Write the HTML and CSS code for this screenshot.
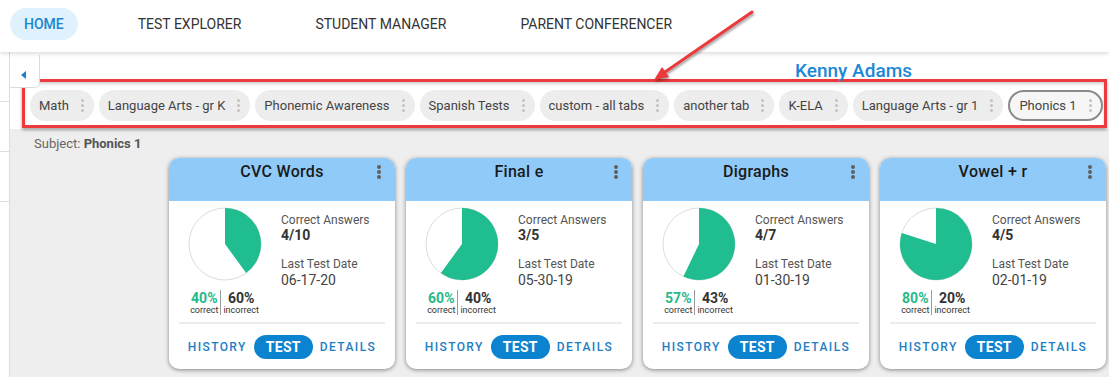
FILE: index.html
```html
<!DOCTYPE html>
<html lang="en">
<head>
  <meta charset="UTF-8">
  <meta name="viewport" content="width=device-width, initial-scale=1.0">
  <title>Home - Kenny Adams</title>
  <link rel="stylesheet" href="styles.css">
</head>
<body>
  <nav class="topnav">
    <a class="nav-item active">HOME</a>
    <a class="nav-item">TEST EXPLORER</a>
    <a class="nav-item">STUDENT MANAGER</a>
    <a class="nav-item">PARENT CONFERENCER</a>
  </nav>

  <div class="layout">
    <aside class="side">
      <div class="side-row first"></div>
      <div class="side-row"></div>
      <div class="side-row"></div>
    </aside>

    <main class="main">
      <button class="collapse" title="Collapse"><span class="tri-left"></span></button>

      <div class="student-head">
        <div class="student-name">Kenny Adams</div>
        <div class="tab-row">
          <span class="tab">Math<i class="kebab"></i></span>
          <span class="tab">Language Arts - gr K<i class="kebab"></i></span>
          <span class="tab">Phonemic Awareness<i class="kebab"></i></span>
          <span class="tab">Spanish Tests<i class="kebab"></i></span>
          <span class="tab">custom - all tabs<i class="kebab"></i></span>
          <span class="tab">another tab<i class="kebab"></i></span>
          <span class="tab">K-ELA<i class="kebab"></i></span>
          <span class="tab">Language Arts - gr 1<i class="kebab"></i></span>
          <span class="tab active">Phonics 1<i class="kebab"></i></span>
        </div>
      </div>

      <div class="content">
        <div class="subject">Subject: <b>Phonics 1</b></div>

        <div class="cards">
          <div class="card">
            <div class="card-head"><span></span><span class="card-title">CVC Words</span><i class="kebab dark"></i></div>
            <div class="card-body">
              <div class="score">
                <svg class="pie" viewBox="0 0 74 74"><circle cx="37" cy="37" r="36" fill="#fff" stroke="#dcdcdc"/><path d="M37 37 L37 1 A36 36 0 0 1 58.16 66.12 Z" fill="#1fbd8f"/></svg>
                <div class="pct">
                  <div class="pct-cell good"><b>40%</b><small>correct</small></div>
                  <div class="pct-cell bad"><b>60%</b><small>incorrect</small></div>
                </div>
              </div>
              <div class="info">
                <div class="label">Correct Answers</div>
                <div class="value strong">4/10</div>
                <div class="label">Last Test Date</div>
                <div class="value">06-17-20</div>
              </div>
            </div>
            <div class="card-actions"><a>HISTORY</a><a class="primary">TEST</a><a>DETAILS</a></div>
          </div>

          <div class="card">
            <div class="card-head"><span></span><span class="card-title">Final e</span><i class="kebab dark"></i></div>
            <div class="card-body">
              <div class="score">
                <svg class="pie" viewBox="0 0 74 74"><circle cx="37" cy="37" r="36" fill="#fff" stroke="#dcdcdc"/><path d="M37 37 L37 1 A36 36 0 1 1 15.84 66.12 Z" fill="#1fbd8f"/></svg>
                <div class="pct">
                  <div class="pct-cell good"><b>60%</b><small>correct</small></div>
                  <div class="pct-cell bad"><b>40%</b><small>incorrect</small></div>
                </div>
              </div>
              <div class="info">
                <div class="label">Correct Answers</div>
                <div class="value strong">3/5</div>
                <div class="label">Last Test Date</div>
                <div class="value">05-30-19</div>
              </div>
            </div>
            <div class="card-actions"><a>HISTORY</a><a class="primary">TEST</a><a>DETAILS</a></div>
          </div>

          <div class="card">
            <div class="card-head"><span></span><span class="card-title">Digraphs</span><i class="kebab dark"></i></div>
            <div class="card-body">
              <div class="score">
                <svg class="pie" viewBox="0 0 74 74"><circle cx="37" cy="37" r="36" fill="#fff" stroke="#dcdcdc"/><path d="M37 37 L37 1 A36 36 0 1 1 21.38 69.44 Z" fill="#1fbd8f"/></svg>
                <div class="pct">
                  <div class="pct-cell good"><b>57%</b><small>correct</small></div>
                  <div class="pct-cell bad"><b>43%</b><small>incorrect</small></div>
                </div>
              </div>
              <div class="info">
                <div class="label">Correct Answers</div>
                <div class="value strong">4/7</div>
                <div class="label">Last Test Date</div>
                <div class="value">01-30-19</div>
              </div>
            </div>
            <div class="card-actions"><a>HISTORY</a><a class="primary">TEST</a><a>DETAILS</a></div>
          </div>

          <div class="card">
            <div class="card-head"><span></span><span class="card-title">Vowel + r</span><i class="kebab dark"></i></div>
            <div class="card-body">
              <div class="score">
                <svg class="pie" viewBox="0 0 74 74"><circle cx="37" cy="37" r="36" fill="#fff" stroke="#dcdcdc"/><path d="M37 37 L37 1 A36 36 0 1 1 2.76 25.88 Z" fill="#1fbd8f"/></svg>
                <div class="pct">
                  <div class="pct-cell good"><b>80%</b><small>correct</small></div>
                  <div class="pct-cell bad"><b>20%</b><small>incorrect</small></div>
                </div>
              </div>
              <div class="info">
                <div class="label">Correct Answers</div>
                <div class="value strong">4/5</div>
                <div class="label">Last Test Date</div>
                <div class="value">02-01-19</div>
              </div>
            </div>
            <div class="card-actions"><a>HISTORY</a><a class="primary">TEST</a><a>DETAILS</a></div>
          </div>
        </div>
      </div>
    </main>
  </div>

  <!-- annotation arrow drawn over the screenshot -->
  <svg class="annot-arrow" width="1109" height="377" viewBox="0 0 1109 377">
    <line x1="752" y1="12" x2="665" y2="72" stroke="#ea3a3c" stroke-width="3" stroke-linecap="round"/>
    <polygon points="654,80 669,77 662,67" fill="#ea3a3c"/>
  </svg>
</body>
</html>
```

FILE: styles.css
```css
* { box-sizing: border-box; }
html, body { margin: 0; height: 100%; overflow: hidden; }
body { font-family: Roboto, "Liberation Sans", sans-serif; color: #333; background: #fff; position: relative; }

.topnav {
  height: 52px; display: flex; align-items: flex-start; gap: 46px;
  padding: 8px 10px 0; background: #fff;
  box-shadow: 0 2px 4px rgba(0,0,0,0.13); position: relative; z-index: 2;
}
.nav-item { padding: 0 14px; height: 32px; line-height: 32px; border-radius: 16px; font-size: 14px; color: #333; }
.nav-item.active { background: #dff1fc; color: #1a86d1; font-weight: 500; }

.layout { display: flex; height: calc(100% - 52px); }
.side { width: 10px; flex-shrink: 0; background: #fff; border-right: 1px solid #dcdcdc; }
.side-row { height: 50px; border-bottom: 1px solid #dedede; }

.main { flex: 1; min-width: 0; position: relative; background: #eee; }
.collapse {
  position: absolute; left: 0; top: 3px; width: 30px; height: 33px;
  background: #fff; border: 1px solid #dcdcdc; border-left: none; border-top: none;
  border-radius: 0 0 5px 0; padding: 0; z-index: 1;
}
.tri-left {
  position: absolute; left: 11px; top: 16px; width: 0; height: 0;
  border-top: 4px solid transparent; border-bottom: 4px solid transparent; border-right: 5px solid #1a7fd0;
}

.student-head { background: #fff; padding: 8px 2px 1px 12px; }
.student-name { font-size: 19px; font-weight: 500; color: #1b88d6; line-height: 21px; padding-left: 773px; }
.tab-row {
  display: flex; gap: 5px; margin-top: -2px; overflow: hidden;
  border: 3px solid #ee3a3d; padding: 8px 5px 4px;
  box-shadow: 0 2px 3px rgba(0,0,0,0.35), inset 0 2px 3px rgba(0,0,0,0.18);
}
.tab {
  display: flex; align-items: center; gap: 12px; flex-shrink: 0;
  height: 31px; padding: 0 10px 0 9px; border-radius: 16px;
  background: #ededed; font-size: 13px; color: #444; white-space: nowrap;
}
.tab.active { border: 2px solid #8a8a8a; background: #f6f6f6; padding: 0 9px 0 9px; }

.kebab {
  display: inline-block; width: 3px; height: 3px; border-radius: 50%;
  background: #c2c2c2; box-shadow: 0 -5px 0 #c2c2c2, 0 5px 0 #c2c2c2;
}
.kebab.dark { background: #5f5f5f; box-shadow: 0 -5px 0 #5f5f5f, 0 5px 0 #5f5f5f; width: 4px; height: 4px; }

.content { padding: 8px 0 0 24px; }
.subject { font-size: 13px; color: #666; line-height: 14px; }
.subject b { font-weight: 700; color: #555; }

.cards { display: flex; gap: 11px; margin: 7px 0 0 135px; }
.card {
  width: 226px; height: 211px; flex-shrink: 0; background: #fff; border-radius: 10px;
  box-shadow: 0 1px 4px rgba(0,0,0,0.45); overflow: hidden;
  display: flex; flex-direction: column;
}
.card-head {
  height: 43px; flex-shrink: 0; background: #90caf9; padding: 5px 14px 0;
  display: grid; grid-template-columns: 1fr auto 1fr; align-items: start;
}
.card-title { font-size: 16px; font-weight: 500; color: #1a1a1a; line-height: 18px; letter-spacing: 0.3px; }
.card-head .kebab { justify-self: end; margin-top: 7px; }

.card-body { flex: 1; display: flex; padding: 6px 0 0 19px; }
.score { width: 73px; display: flex; flex-direction: column; align-items: center; }
.pie { width: 74px; height: 74px; display: block; }
.pct { display: flex; margin-top: 9px; }
.pct-cell { display: flex; flex-direction: column; align-items: center; padding: 0 2px; }
.pct-cell b { font-size: 14px; line-height: 16px; font-weight: 700; }
.pct-cell small { font-size: 9px; line-height: 9px; color: #333; }
.pct-cell.good b { color: #27b98a; }
.pct-cell.bad { border-left: 1px solid #9a9a9a; }
.pct-cell.bad b { color: #333; }

.info { margin: 6px 0 0 20px; }
.label { font-size: 12px; line-height: 15px; color: #555; }
.value { font-size: 14px; line-height: 16px; color: #444; }
.value.strong { font-size: 14px; font-weight: 700; color: #333; line-height: 15px; margin-bottom: 14px; }

.card-actions {
  height: 47px; flex-shrink: 0; margin: 0 10px; border-top: 2px solid #ececec;
  display: flex; align-items: center; justify-content: center; gap: 7px;
}
.card-actions a { font-size: 12px; font-weight: 500; letter-spacing: 1.4px; color: #1d7ec4; }
.card-actions a.primary {
  background: #0b83cf; color: #fff; font-size: 14px; font-weight: 700; letter-spacing: 0.3px;
  height: 24px; line-height: 24px; padding: 0 12px; border-radius: 12px;
}

.annot-arrow {
  position: absolute; left: 0; top: 0; pointer-events: none; z-index: 5;
  filter: drop-shadow(1px 2px 1px rgba(0,0,0,0.35));
}
```
